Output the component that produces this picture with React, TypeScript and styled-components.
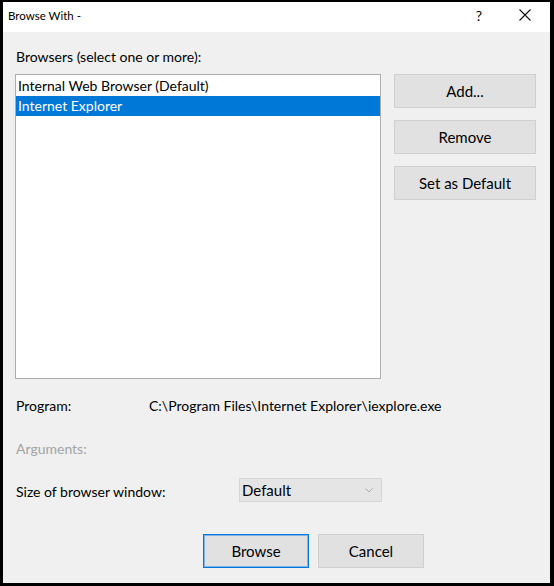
import React from "react";
import styled, { createGlobalStyle } from "styled-components";

const GlobalStyle = createGlobalStyle`
  html, body {
    margin: 0;
    padding: 0;
    background: #000;
  }
  body {
    font-family: Lato, "Noto Sans", sans-serif;
  }
`;

const browsers = ["Internal Web Browser (Default)", "Internet Explorer"];

export default function App() {
  const selected = 1;

  return (
    <>
      <GlobalStyle />
      <Window>
        <TitleBar>
          <Title>Browse With -</Title>
          <HelpButton>?</HelpButton>
          <CloseButton aria-label="Close">
            <svg width="12" height="12" viewBox="0 0 12 12">
              <path d="M0.5 0.5 L11.5 11.5 M11.5 0.5 L0.5 11.5" stroke="#111" strokeWidth="1.1" />
            </svg>
          </CloseButton>
        </TitleBar>

        <Body>
          <Label>Browsers (select one or more):</Label>
          <MainRow>
            <ListBox>
              {browsers.map((name, i) => (
                <ListItem key={name} $selected={i === selected}>
                  {name}
                </ListItem>
              ))}
            </ListBox>
            <SideButtons>
              <Button>Add...</Button>
              <Button>Remove</Button>
              <Button>Set as Default</Button>
            </SideButtons>
          </MainRow>

          <InfoRow>
            <Label>Program:</Label>
            <Label>C:\Program Files\Internet Explorer\iexplore.exe</Label>
          </InfoRow>

          <ArgsLabel>Arguments:</ArgsLabel>

          <SizeRow>
            <SizeLabel>Size of browser window:</SizeLabel>
            <Select>
              <span>Default</span>
              <svg width="8" height="5" viewBox="0 0 8 5">
                <path d="M0.5 0.5 L4 4 L7.5 0.5" fill="none" stroke="#a8a8a8" strokeWidth="1" />
              </svg>
            </Select>
          </SizeRow>

          <Footer>
            <Button $primary $w={106}>Browse</Button>
            <Button $w={106}>Cancel</Button>
          </Footer>
        </Body>
      </Window>
    </>
  );
}

const Window = styled.div`
  width: 554px;
  height: 586px;
  box-sizing: border-box;
  border-style: solid;
  border-color: #000;
  border-width: 2px 4px 3px 3px;
  background: #f0f0f0;
  display: flex;
  flex-direction: column;
  color: #000;
`;

const TitleBar = styled.div`
  height: 30px;
  background: #fff;
  display: flex;
  align-items: center;
  padding-left: 5px;
`;

const Title = styled.div`
  flex: 1;
  font-size: 11.5px;
  margin-top: -4px;
`;

const HelpButton = styled.div`
  width: 46px;
  text-align: center;
  font-size: 14px;
  margin-top: -4px;
`;

const CloseButton = styled.div`
  width: 46px;
  display: flex;
  justify-content: center;
  margin-top: -4px;
  margin-right: 2px;
`;

const Body = styled.div`
  flex: 1;
  padding: 15px 0 0 12px;
  font-size: 14px;
`;

const Label = styled.div`
  line-height: 20px;
  white-space: nowrap;
  padding-left: 1px;
`;

const MainRow = styled.div`
  display: flex;
  gap: 13px;
  margin-top: 7px;
`;

const ListBox = styled.div`
  width: 366px;
  height: 305px;
  box-sizing: border-box;
  background: #fff;
  border: 1px solid #adadad;
  padding-top: 1px;
`;

const ListItem = styled.div<{ $selected?: boolean }>`
  height: 20px;
  line-height: 20px;
  padding-left: 2px;
  background: ${(p) => (p.$selected ? "#0078d7" : "transparent")};
  color: ${(p) => (p.$selected ? "#fff" : "#000")};
`;

const SideButtons = styled.div`
  display: flex;
  flex-direction: column;
  gap: 12px;
`;

const Button = styled.button<{ $primary?: boolean; $w?: number }>`
  width: ${(p) => p.$w ?? 142}px;
  height: 34px;
  box-sizing: border-box;
  background: #e1e1e1;
  border: 1px solid ${(p) => (p.$primary ? "#0078d7" : "#d0d0d0")};
  box-shadow: ${(p) => (p.$primary ? "inset 0 0 0 1px #7eb4ea" : "none")};
  font-family: inherit;
  font-size: 15px;
  color: #000;
  padding: 0;
`;

const InfoRow = styled.div`
  display: grid;
  grid-template-columns: 133px auto;
  margin-top: 17px;
`;

const ArgsLabel = styled(Label)`
  margin-top: 23px;
  color: #a3a3a3;
`;

const SizeRow = styled.div`
  display: grid;
  grid-template-columns: 224px auto;
  align-items: center;
  margin-top: 19px;
`;

const SizeLabel = styled(Label)`
  padding-top: 4px;
`;

const Select = styled.div`
  width: 143px;
  height: 24px;
  box-sizing: border-box;
  background: #e5e5e5;
  border: 1px solid #d5d5d5;
  display: flex;
  align-items: center;
  justify-content: space-between;
  padding: 0 8px 0 2px;
  font-size: 15px;
`;

const Footer = styled.div`
  display: flex;
  gap: 9px;
  margin: 32px 0 0 188px;
`;
